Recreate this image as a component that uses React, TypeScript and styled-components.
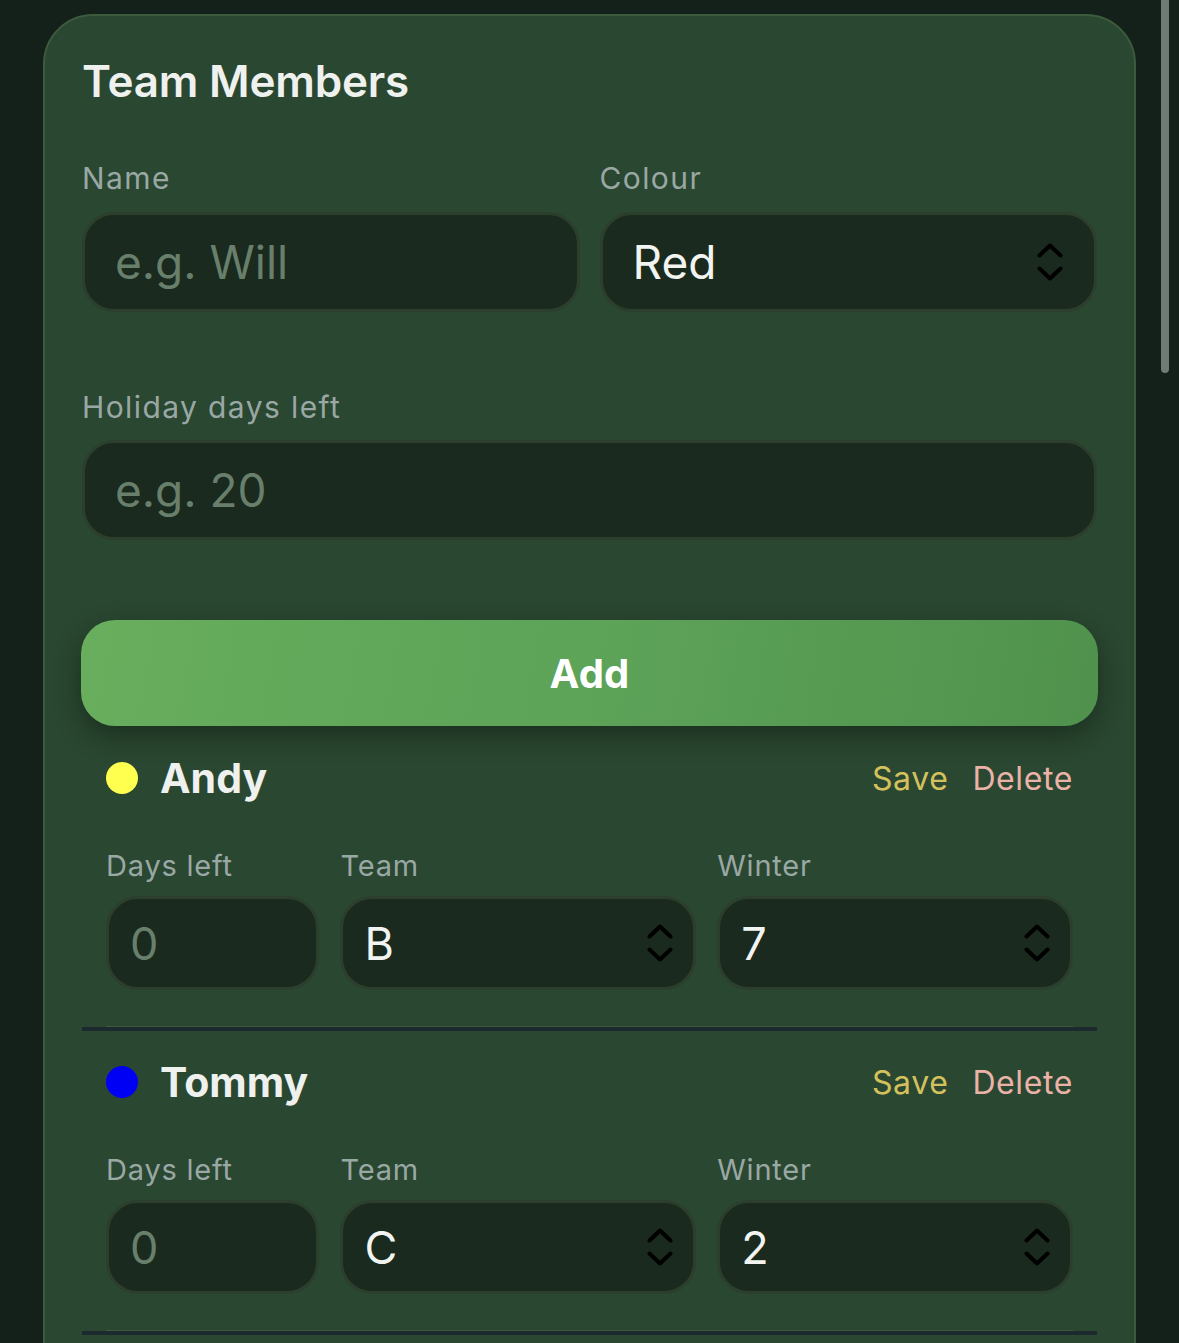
import React from "react";
import styled, { createGlobalStyle } from "styled-components";

const GlobalStyle = createGlobalStyle`
  html, body {
    margin: 0;
    padding: 0;
    background: #13211a;
    overflow: hidden;
  }
  body::-webkit-scrollbar { display: none; }
  * { box-sizing: border-box; }
  body {
    font-family: Inter, "Noto Sans", "Liberation Sans", sans-serif;
    -webkit-font-smoothing: antialiased;
  }
`;

const Page = styled.div`
  padding: 14px 43px 0;
  min-height: 1343px;
`;

const Card = styled.section`
  background: #2a4731;
  border: 2px solid #3d5b3c;
  border-radius: 50px;
  padding: 38px 37px 120px;
`;

const Title = styled.h2`
  margin: 0 0 52px;
  font-size: 44px;
  line-height: 54px;
  font-weight: 600;
  color: #eef1ee;
  letter-spacing: -0.2px;
`;

const FieldRow = styled.div<{ $cols: string; $gap: number }>`
  display: grid;
  grid-template-columns: ${(p) => p.$cols};
  gap: ${(p) => p.$gap}px;
`;

const Field = styled.label<{ $labelGap: number }>`
  display: flex;
  flex-direction: column;
  gap: ${(p) => p.$labelGap}px;
  min-width: 0;
`;

const Label = styled.span<{ $size: number; $track: number }>`
  font-size: ${(p) => p.$size}px;
  line-height: 36px;
  color: #9aa8a5;
  letter-spacing: ${(p) => p.$track}px;
`;

const TextInput = styled.input<{ $h: number; $size: number; $pad: number }>`
  width: 100%;
  height: ${(p) => p.$h}px;
  background: #1a2a1e;
  border: 3px solid #2c3f2d;
  border-radius: 32px;
  padding: 0 ${(p) => p.$pad - 3}px;
  font-family: inherit;
  font-size: ${(p) => p.$size}px;
  color: #f1f4f0;
  outline: none;
  &::placeholder {
    color: #687f6c;
  }
`;

const SelectWrap = styled.div`
  position: relative;
  width: 100%;
`;

const Select = styled.select<{ $h: number; $size: number; $pad: number }>`
  appearance: none;
  -webkit-appearance: none;
  width: 100%;
  height: ${(p) => p.$h}px;
  background: #1a2a1e;
  border: 3px solid #2c3f2d;
  border-radius: 32px;
  padding: 0 ${(p) => p.$pad - 3}px;
  font-family: inherit;
  font-size: ${(p) => p.$size}px;
  color: #f1f4f0;
  outline: none;
`;

const ChevronBox = styled.span<{ $right: number }>`
  position: absolute;
  right: ${(p) => p.$right}px;
  top: 50%;
  transform: translateY(-50%);
  display: flex;
  pointer-events: none;
`;

const Chevrons = ({ right }: { right: number }) => (
  <ChevronBox $right={right}>
    <svg width="26" height="38" viewBox="0 0 26 38" fill="none">
      <path d="M2.5 12.5 L13 2.5 L23.5 12.5" stroke="#000" strokeWidth="4" strokeLinecap="round" strokeLinejoin="round" />
      <path d="M2.5 25.5 L13 35.5 L23.5 25.5" stroke="#000" strokeWidth="4" strokeLinecap="round" strokeLinejoin="round" />
    </svg>
  </ChevronBox>
);

const Spacer = styled.div<{ $h: number }>`
  height: ${(p) => p.$h}px;
`;

const AddButton = styled.button`
  width: calc(100% + 2px);
  margin-left: -1px;
  height: 106px;
  border: none;
  border-radius: 34px;
  background: linear-gradient(100deg, #68ae5d 0%, #5da358 50%, #50924d 100%);
  box-shadow: 0 10px 26px rgba(8, 20, 10, 0.45);
  color: #ffffff;
  font-family: inherit;
  font-size: 40px;
  font-weight: 700;
  letter-spacing: 0.2px;
  cursor: pointer;
`;

const MemberList = styled.div`
  display: flex;
  flex-direction: column;
`;

const MemberItem = styled.div`
  border-bottom: 4px solid #1c2a2f;
`;

const MemberInner = styled.div`
  margin: 0 24px;
  padding: 27px 0 36px;
  border-bottom: 1px solid #3a593d;
`;

const MemberHeader = styled.div`
  display: flex;
  align-items: center;
  justify-content: space-between;
  height: 48px;
  margin-bottom: 46px;
`;

const NameGroup = styled.div`
  display: flex;
  align-items: center;
  gap: 22px;
`;

const Dot = styled.span<{ $color: string }>`
  width: 32px;
  height: 32px;
  border-radius: 50%;
  background: ${(p) => p.$color};
`;

const MemberName = styled.span`
  font-size: 41px;
  font-weight: 700;
  color: #eef1ee;
`;

const Actions = styled.div`
  display: flex;
  gap: 24px;
`;

const ActionLink = styled.button<{ $color: string }>`
  background: none;
  border: none;
  padding: 0;
  font-family: inherit;
  font-size: 32px;
  letter-spacing: 0.6px;
  color: ${(p) => p.$color};
  cursor: pointer;
`;

const ScrollThumb = styled.div`
  position: fixed;
  top: -4px;
  right: 10px;
  width: 8px;
  height: 377px;
  border-radius: 4px;
  background: #6e7b77;
`;

type Member = {
  name: string;
  color: string;
  team: string;
  winter: string;
};

const members: Member[] = [
  { name: "Andy", color: "#ffff4f", team: "B", winter: "7" },
  { name: "Tommy", color: "#0000f5", team: "C", winter: "2" },
];

const MemberRow = ({ m }: { m: Member }) => (
  <MemberItem>
    <MemberInner>
      <MemberHeader>
        <NameGroup>
          <Dot $color={m.color} />
          <MemberName>{m.name}</MemberName>
        </NameGroup>
        <Actions>
          <ActionLink $color="#d4c15d">Save</ActionLink>
          <ActionLink $color="#ebb3a7">Delete</ActionLink>
        </Actions>
      </MemberHeader>
      <FieldRow $cols="0.6fr 1fr 1fr" $gap={21}>
        <Field $labelGap={12}>
          <Label $size={29} $track={0.8}>Days left</Label>
          <TextInput $h={94} $size={45} $pad={24} placeholder="0" />
        </Field>
        <Field $labelGap={12}>
          <Label $size={29} $track={0.8}>Team</Label>
          <SelectWrap>
            <Select $h={94} $size={45} $pad={24} defaultValue={m.team}>
              <option>A</option>
              <option>B</option>
              <option>C</option>
            </Select>
            <Chevrons right={23} />
          </SelectWrap>
        </Field>
        <Field $labelGap={12}>
          <Label $size={29} $track={0.8}>Winter</Label>
          <SelectWrap>
            <Select $h={94} $size={45} $pad={24} defaultValue={m.winter}>
              {["1", "2", "3", "4", "5", "6", "7", "8"].map((v) => (
                <option key={v}>{v}</option>
              ))}
            </Select>
            <Chevrons right={23} />
          </SelectWrap>
        </Field>
      </FieldRow>
    </MemberInner>
  </MemberItem>
);

export default function App() {
  return (
    <>
      <GlobalStyle />
      <Page>
        <Card>
          <Title>Team Members</Title>
          <FieldRow $cols="1fr 1fr" $gap={20}>
            <Field $labelGap={16}>
              <Label $size={30} $track={1.4}>Name</Label>
              <TextInput $h={100} $size={46} $pad={33} placeholder="e.g. Will" />
            </Field>
            <Field $labelGap={16}>
              <Label $size={30} $track={1.4}>Colour</Label>
              <SelectWrap>
                <Select $h={100} $size={46} $pad={33} defaultValue="Red">
                  <option>Red</option>
                  <option>Yellow</option>
                  <option>Blue</option>
                  <option>Green</option>
                </Select>
                <Chevrons right={34} />
              </SelectWrap>
            </Field>
          </FieldRow>
          <Spacer $h={77} />
          <FieldRow $cols="1fr" $gap={0}>
            <Field $labelGap={15}>
              <Label $size={30} $track={1.4}>Holiday days left</Label>
              <TextInput $h={100} $size={46} $pad={33} placeholder="e.g. 20" />
            </Field>
          </FieldRow>
          <Spacer $h={80} />
          <AddButton>Add</AddButton>
          <Spacer $h={1} />
          <MemberList>
            {members.map((m) => (
              <MemberRow key={m.name} m={m} />
            ))}
          </MemberList>
        </Card>
      </Page>
      <ScrollThumb />
    </>
  );
}
